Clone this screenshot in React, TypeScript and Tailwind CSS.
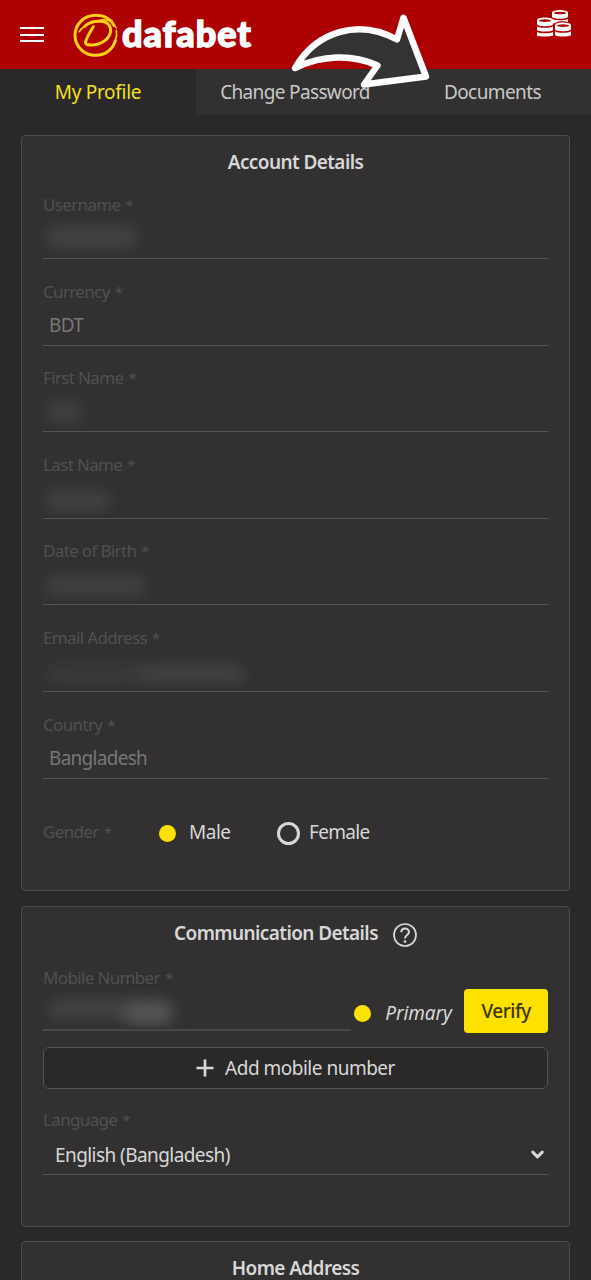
import { ChevronDown } from "lucide-react";
import type { ReactNode } from "react";

type Smudge = { className: string };

type FieldProps = {
  label: string;
  value?: string;
  /** Soft blobs drawn in place of a hidden value. */
  smudges?: readonly Smudge[];
};

const tabs = [
  { label: "My Profile", active: true, className: "tracking-[-0.3px]" },
  { label: "Change Password", active: false, className: "tracking-[-0.65px]" },
  { label: "Documents", active: false, className: "tracking-[-0.58px]" },
];

const accountFields: readonly FieldProps[] = [
  {
    label: "Username",
    smudges: [{ className: "left-[9px] top-[9px] h-[24px] w-[93px] bg-[#424242]" }],
  },
  { label: "Currency", value: "BDT" },
  {
    label: "First Name",
    smudges: [{ className: "left-[10px] top-[12px] h-[22px] w-[37px] bg-[#404040]" }],
  },
  {
    label: "Last Name",
    smudges: [{ className: "left-[9px] top-[14px] h-[22px] w-[66px] bg-[#414141]" }],
  },
  {
    label: "Date of Birth",
    smudges: [{ className: "left-[9px] top-[11px] h-[24px] w-[102px] bg-[#3f3f3f]" }],
  },
  {
    label: "Email Address",
    smudges: [
      { className: "left-[9px] top-[15px] h-[20px] w-[100px] bg-[#3a3a3a]" },
      { className: "left-[100px] top-[15px] h-[20px] w-[110px] bg-[#414141]" },
    ],
  },
  { label: "Country", value: "Bangladesh" },
];

function Logo() {
  return (
    <div className="ml-7 flex items-center text-white">
      <svg
        width="48"
        height="46"
        viewBox="12 10 144 138"
        fill="none"
        stroke="#ffd21a"
        strokeLinecap="round"
      >
        <path d="M138 50C128 30 108 20 84 20C48 20 21 46 21 80C21 114 49 140 83 140C112 140 135 122 142 96" strokeWidth="9" />
        <path d="M142 96C146 85 147 76 145 66" strokeWidth="5" />
        <path d="M50 53C62 42 80 37 98 38C122 40 131 55 127 72C121 95 96 109 68 109C57 109 51 107 53 99C57 84 65 72 76 54" strokeWidth="9" />
        <path d="M34 69C38 62 43 57 50 53" strokeWidth="5" />
        <path d="M92 36C114 28 134 38 145 58" strokeWidth="4" />
      </svg>
      <span className="-mt-[4px] ml-[2px] font-['Lato'] text-[36px] leading-10 font-black tracking-[0.9px] [-webkit-text-stroke:1.4px_white]">
        dafabet
      </span>
    </div>
  );
}

/** One stack: an open ellipse on top and curved bands below it. */
function CoinStack({ x, y }: { x: number; y: number }) {
  return (
    <g transform={`translate(${x} ${y})`}>
      <path
        d="M0 8C0 -3 48 -3 48 8V20C46 28 2 28 0 20Z"
        fill="white"
      />
      <ellipse cx="24" cy="9" rx="18" ry="4" fill="#ad0000" />
      <path d="M0 26C8 32 40 32 48 26V38C40 43 8 43 0 38Z" fill="white" />
    </g>
  );
}

function CoinsIcon() {
  return (
    <svg width="36" height="28" viewBox="798 28 108 84">
      <CoinStack x={846} y={31} />
      <path d="M852 76C852 61 904 61 904 76V112H852Z" fill="#ad0000" />
      <CoinStack x={855} y={69} />
      <CoinStack x={801} y={54} />
      <path d="M801 97C809 102 841 102 849 97V108C841 111 809 111 801 108Z" fill="white" />
    </svg>
  );
}

function ArrowPointer() {
  return (
    <svg
      className="pointer-events-none absolute top-[10px] left-[286px]"
      width="148"
      height="82"
      viewBox="286 10 148 82"
    >
      <path
        d="M295 68C317 30 360 19 397 39.5L403.5 17.7L426 76.5L364 84.5L377.5 65.5C352 54 322 55 295 68Z"
        fill="#333"
        stroke="white"
        strokeWidth="6.4"
        strokeLinejoin="round"
      />
    </svg>
  );
}

function Label({ children }: { children: ReactNode }) {
  return (
    <p className="text-[17px] leading-[22px] tracking-[-0.65px] text-[#505050]">
      {children}
      <span className="ml-[5px] text-[15px] leading-none">*</span>
    </p>
  );
}

function Heading({ children }: { children: ReactNode }) {
  return (
    <h2 className="text-center text-[19px] leading-6 font-semibold tracking-[-0.6px]">
      {children}
    </h2>
  );
}

function Smudges({ items }: { items: readonly Smudge[] }) {
  return (
    <div className="relative -ml-[7px] h-[39px] w-[252px] overflow-hidden">
      {items.map((s) => (
        <span key={s.className} className={`absolute rounded-full blur-[7px] ${s.className}`} />
      ))}
    </div>
  );
}

function Field({ label, value, smudges }: FieldProps) {
  return (
    <div className="flex h-[86.6px] flex-col">
      <Label>{label}</Label>
      <div className="h-[43px] border-b border-[#545454]">
        {value && (
          <p className="pt-[10px] pl-[6px] text-[19px] leading-[24px] tracking-[-0.72px] text-[#777]">
            {value}
          </p>
        )}
        {smudges && <Smudges items={smudges} />}
      </div>
    </div>
  );
}

function Card({ className, children }: { className: string; children: ReactNode }) {
  return (
    <section
      className={`mx-[21px] rounded-[4px] border border-[#4c4c4c] bg-[#323030] px-[21px] ${className}`}
    >
      {children}
    </section>
  );
}

export default function App() {
  return (
    <div className="relative h-[1280px] w-[591px] overflow-hidden bg-[#2a2828] font-['Noto_Sans','Open_Sans',sans-serif] text-[#d8d8d8]">
      <header className="flex h-[69px] items-center bg-[#ad0000] pl-5">
        <div className="flex w-6 flex-col gap-[4.5px]">
          <span className="h-[2px] bg-white" />
          <span className="h-[2px] bg-white" />
          <span className="h-[2px] bg-white" />
        </div>
        <Logo />
        <div className="mr-[19px] mb-[23px] ml-auto">
          <CoinsIcon />
        </div>
      </header>

      <nav className="grid h-[45px] grid-cols-[196px_198px_197px]">
        {tabs.map((tab) => (
          <div
            key={tab.label}
            className={`pt-[11px] text-center text-[19px] leading-6 ${tab.className} ${
              tab.active ? "text-[#f5e11e]" : "bg-[#323030] text-[#c8c8c8]"
            }`}
          >
            {tab.label}
          </div>
        ))}
      </nav>

      <Card className="mt-[21px] h-[756px] pt-[14px]">
        <Heading>Account Details</Heading>
        <div className="pt-[20px]">
          {accountFields.map((f) => (
            <Field key={f.label} {...f} />
          ))}
        </div>
        <div className="flex items-center pt-[19px]">
          <div className="w-[116px]">
            <Label>Gender</Label>
          </div>
          <span className="mt-[3px] size-[17px] rounded-full bg-[#ffe100]" />
          <span className="ml-[13px] w-[43px] text-[19px] leading-6 tracking-[-0.5px]">Male</span>
          <span className="mt-[3px] ml-[45px] size-[23px] rounded-full border-[3px] border-[#d8d8d8]" />
          <span className="ml-[9px] text-[19px] leading-6 tracking-[-0.7px]">Female</span>
        </div>
      </Card>

      <Card className="mt-[15px] h-[321px] pt-[14px]">
        <div className="flex h-[26px] items-start justify-center gap-[15px]">
          <Heading>Communication Details</Heading>
          <svg className="mt-[2px]" width="24" height="24" viewBox="0 0 24 24" fill="none" stroke="#d8d8d8">
            <circle cx="12" cy="12" r="11" strokeWidth="1.7" />
            <path d="M8.3 9.2C8.3 4.4 16 4.4 16 9C16 12 12 12 12 15.4" strokeWidth="2" />
            <circle cx="12" cy="18.6" r="0.8" strokeWidth="1.2" />
          </svg>
        </div>
        <div className="flex pt-[20px]">
          <div className="w-[309px]">
            <Label>Mobile Number</Label>
            <div className="h-[42px] border-b-2 border-[#484848]">
              <Smudges
                items={[
                  { className: "left-[12px] top-[9px] h-[22px] w-[90px] bg-[#424242]" },
                  { className: "left-[88px] top-[11px] h-[25px] w-[50px] bg-[#545454]" },
                ]}
              />
            </div>
          </div>
          <span className="mt-[38px] ml-[3px] size-[17px] rounded-full bg-[#ffe100]" />
          <span className="mt-[34px] ml-[14px] w-[79px] text-[19px] leading-6 tracking-[-0.1px] italic">
            Primary
          </span>
          <button className="mt-[22px] h-[44px] w-[84px] rounded bg-[#ffe100] text-[19px] leading-6 font-medium tracking-[-0.5px] text-[#3b3508]">
            Verify
          </button>
        </div>
        <button className="mt-[14px] flex h-[42px] w-full items-center justify-center gap-[11px] rounded-md border border-[#545454] bg-[#2a2828] text-[19px]">
          <svg width="18" height="18" viewBox="0 0 18 18" stroke="#d8d8d8" strokeWidth="2.7">
            <path d="M9 0.5V17.5M0.5 9H17.5" />
          </svg>
          <span className="tracking-[-0.5px]">Add mobile number</span>
        </button>
        <div className="pt-[20px]">
          <Label>Language</Label>
          <div className="flex h-[44px] items-center justify-between border-b border-[#545454] pt-[4px] pr-[1px] pl-3">
            <span className="text-[19px] leading-6 tracking-[-0.57px]">English (Bangladesh)</span>
            <ChevronDown size={19} strokeWidth={3.8} />
          </div>
        </div>
      </Card>

      <Card className="mt-[14px] h-[100px] pt-[14px]">
        <Heading>Home Address</Heading>
      </Card>

      <ArrowPointer />
    </div>
  );
}
